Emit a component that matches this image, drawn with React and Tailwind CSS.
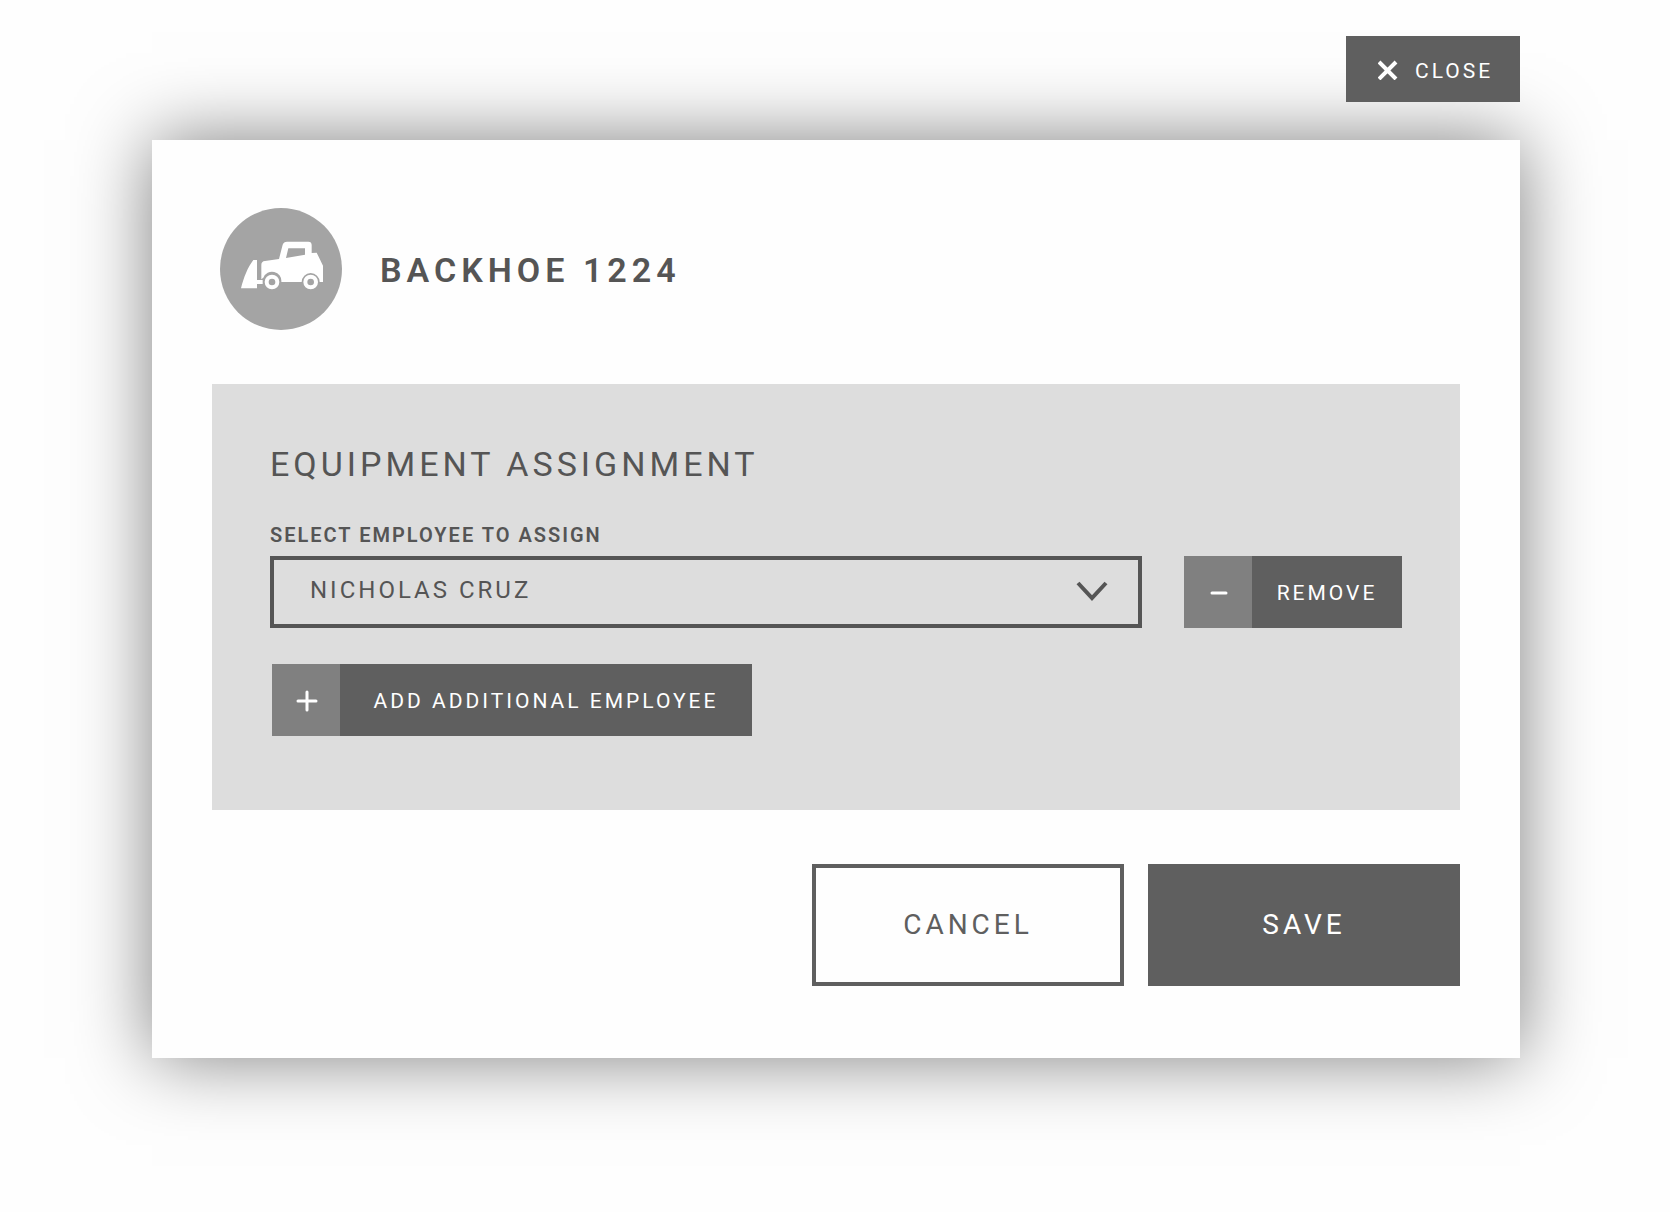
function BackhoeBadge() {
  return (
    <svg viewBox="30 54 366 366" className="size-[122px] shrink-0" role="img" aria-label="Backhoe">
      <circle cx="213" cy="237" r="183" fill="#a4a4a4" />
      <g fill="#fff">
        <path d="M93 295C101 263 113 232 130 210H141V270H158V282H141V295Z" />
        <path
          fillRule="evenodd"
          d="M154 268V225Q154 214 165 213L207 207L218 164Q221 155 231 155H295Q305 155 305 165V189L320 188L339 227V276H329A27 27 0 0 0 275 276H214A28 28 0 0 0 160 263ZM235 175H285V194L228 204Z"
        />
        <path fillRule="evenodd" d="M186 254a22 22 0 1 0 0 44a22 22 0 1 0 0-44ZM186 266a10 10 0 1 1 0 20a10 10 0 1 1 0-20Z" />
        <path fillRule="evenodd" d="M302 254a22 22 0 1 0 0 44a22 22 0 1 0 0-44ZM302 266a10 10 0 1 1 0 20a10 10 0 1 1 0-20Z" />
      </g>
    </svg>
  );
}

function IconButton({ icon, children, className }) {
  return (
    <button type="button" className={`flex h-[72px] bg-[#5f5f5f] text-[21px] leading-6 text-white ${className}`}>
      <span className="flex h-full w-[68px] shrink-0 items-center justify-center bg-[#808080] pt-px pl-0.5">
        <svg viewBox="0 0 22 22" className="size-[22px]" fill="none" stroke="#fff" strokeWidth="3" strokeLinecap="round" aria-hidden="true">
          <path d={icon} />
        </svg>
      </span>
      <span className="flex h-full grow items-center justify-center whitespace-nowrap pt-px tracking-[3px]">{children}</span>
    </button>
  );
}

export default function App() {
  return (
    <div className="flex min-h-screen flex-col bg-[#fefefe] pt-9 pr-[150px] pb-10 pl-[152px] font-[Roboto,sans-serif] text-[#555]">
      <button
        type="button"
        className="relative z-10 flex h-[66px] w-[174px] items-center gap-4 self-end bg-[#5f5f5f] pl-8 text-[21px] leading-6 tracking-[3px] text-white"
      >
        <svg viewBox="0 0 21 21" className="size-[21px]" fill="none" stroke="#fff" strokeWidth="4" aria-hidden="true">
          <path d="M1 3L18 20M18 3L1 20" />
        </svg>
        <span className="pt-1">CLOSE</span>
      </button>

      <main className="mt-[38px] bg-[#fefefe] px-[60px] pt-[68px] pb-[72px] shadow-[0_0_72px_rgba(0,0,0,0.5)]">
        <header className="flex items-center gap-[38px] pl-2">
          <BackhoeBadge />
          <h1 className="pt-0.5 text-[34px] leading-10 font-semibold tracking-[5px]">BACKHOE 1224</h1>
        </header>

        <section className="mt-[54px] bg-[#ddd] px-[58px] pt-[60px] pb-[74px]">
          <h2 className="text-[34px] leading-10 tracking-[4px]">EQUIPMENT ASSIGNMENT</h2>
          <label htmlFor="employee" className="mt-[39px] block text-[20px] leading-6 font-semibold tracking-[2px]">
            SELECT EMPLOYEE TO ASSIGN
          </label>
          <div className="mt-[9px] flex gap-[42px]">
            <div className="relative min-w-0 grow">
              <select
                id="employee"
                className="block h-[72px] w-full appearance-none border-4 border-[#555] bg-transparent pb-1 pl-9 text-[24px] leading-7 tracking-[3px] outline-none"
              >
                <option>NICHOLAS CRUZ</option>
              </select>
              <svg
                viewBox="0 0 32 20"
                className="pointer-events-none absolute top-[25px] right-[34px] h-5 w-8"
                fill="none"
                stroke="#555"
                strokeWidth="4"
                aria-hidden="true"
              >
                <path d="M2 2L16 17L30 2" />
              </svg>
            </div>
            <IconButton icon="M4 11H18" className="w-[218px] shrink-0">
              REMOVE
            </IconButton>
          </div>
          <IconButton icon="M2 11H20M11 2V20" className="mt-9 ml-0.5 w-[480px]">
            ADD ADDITIONAL EMPLOYEE
          </IconButton>
        </section>

        <footer className="mt-[54px] flex justify-end gap-6">
          <button type="button" className="h-[122px] w-[312px] border-4 border-[#5f5f5f] text-[28px] leading-8 tracking-[4px] text-[#5f5f5f]">
            CANCEL
          </button>
          <button type="button" className="h-[122px] w-[312px] bg-[#5f5f5f] text-[28px] leading-8 tracking-[4px] text-white">
            SAVE
          </button>
        </footer>
      </main>
    </div>
  );
}
